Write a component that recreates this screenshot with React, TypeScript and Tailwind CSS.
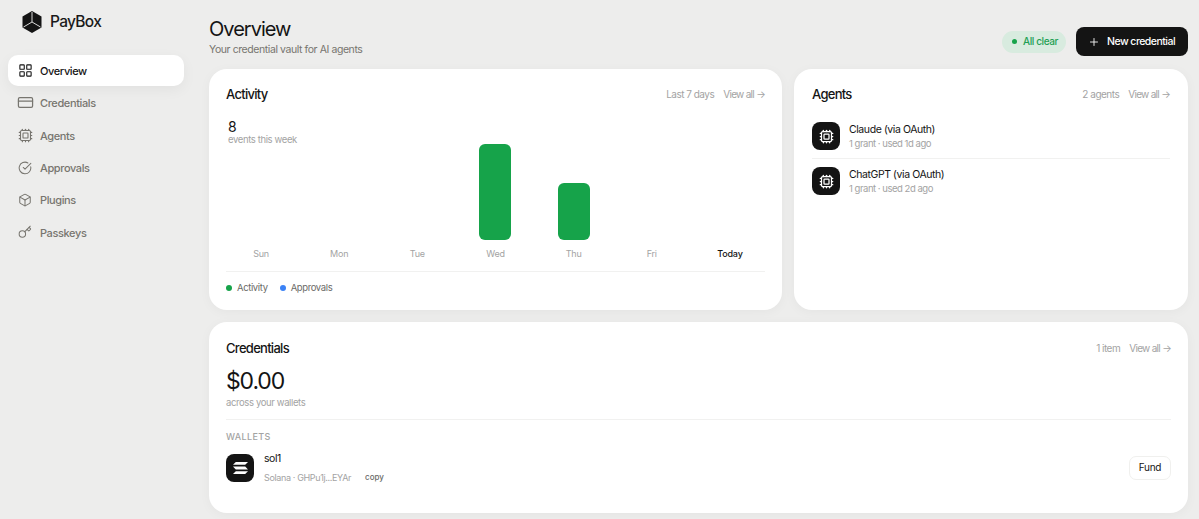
import React from 'react';
import { LayoutGrid, CreditCard, Cpu, CircleCheckBig, Box, Key, Plus } from 'lucide-react';

const navItems = [
  { label: 'Overview', icon: LayoutGrid, size: 15, active: true },
  { label: 'Credentials', icon: CreditCard, size: 17 },
  { label: 'Agents', icon: Cpu, size: 15 },
  { label: 'Approvals', icon: CircleCheckBig, size: 14 },
  { label: 'Plugins', icon: Box, size: 14 },
  { label: 'Passkeys', icon: Key, size: 14 },
];

const days = [
  { day: 'Sun', h: 0 },
  { day: 'Mon', h: 0 },
  { day: 'Tue', h: 0 },
  { day: 'Wed', h: 96 },
  { day: 'Thu', h: 57 },
  { day: 'Fri', h: 0 },
  { day: 'Today', h: 0 },
];

const agents = [
  { name: 'Claude (via OAuth)', sub: '1 grant · used 1d ago' },
  { name: 'ChatGPT (via OAuth)', sub: '1 grant · used 2d ago' },
];

const Logo = () => (
  <svg width="20" height="22" viewBox="0 0 20 22">
    <path d="M10 0 L19.5 5.5 L19.5 16.5 L10 22 L0.5 16.5 L0.5 5.5 Z" fill="#141414" />
    <path d="M10 1 V11 M10 11 L1.5 16 M10 11 L18.5 16" stroke="#ededec" strokeWidth="0.9" fill="none" />
  </svg>
);

const CardHead = ({ title, meta }: { title: string; meta: string }) => (
  <div className="flex items-center justify-between h-[20px]">
    <h2 className="pt-[2px] text-[13px] font-medium text-[#141414] tracking-[-0.055em]">{title}</h2>
    <div className="flex items-center gap-[9px] text-[10px] text-[#a3a3a3] tracking-[-0.05em]">
      <span>{meta}</span>
      <span className="tracking-[-0.07em]">View all →</span>
    </div>
  </div>
);

const App: React.FC = () => {
  return (
    <div
      className="flex w-[1199px] h-[519px] overflow-hidden bg-[#ededec]"
      style={{ fontFamily: 'Inter, "Liberation Sans", sans-serif' }}
    >
      {/* sidebar */}
      <aside className="w-[197px] shrink-0 pl-2 pr-[13px]">
        <div className="flex items-center gap-[8px] h-[55px] pl-[14px] pb-[11px]">
          <Logo />
          <span className="text-[15.5px] font-medium text-[#1a1a1a] tracking-[-0.045em]">PayBox</span>
        </div>
        <nav className="flex flex-col gap-[1.4px]">
          {navItems.map((item) => {
            const Icon = item.icon;
            return (
              <div
                key={item.label}
                className={
                  item.active
                    ? 'flex items-center h-[31px] pl-[10px] gap-[8px] rounded-[10px] bg-white text-[#141414] shadow-[0_4px_14px_rgba(0,0,0,0.05)]'
                    : 'flex items-center h-[31px] pl-[10px] gap-[8px] text-[#77756f]'
                }
              >
                <div className="flex items-center justify-center w-[14px] h-[14px]">
                  <Icon size={item.size} strokeWidth={1.75} className="shrink-0" />
                </div>
                <span className="pt-[1px] text-[11px] font-medium tracking-[-0.035em]">{item.label}</span>
              </div>
            );
          })}
        </nav>
      </aside>

      {/* main */}
      <main className="w-[979px] shrink-0 ml-[12px]">
        <header className="flex items-start justify-between h-[69px] pt-[16px]">
          <div>
            <h1 className="text-[20px] leading-[26px] font-normal text-[#141414] tracking-[-0.05em]">Overview</h1>
            <p className="text-[10.5px] leading-[16px] text-[#77756f] tracking-[-0.04em]">Your credential vault for AI agents</p>
          </div>
          <div className="flex items-center gap-[10px] mt-[11px]">
            <div className="flex items-center gap-[6px] h-[22px] pl-[10px] pr-[8px] rounded-full bg-[#d8ebdf] text-[#1fa055] text-[10px] font-medium tracking-[-0.04em]">
              <span className="w-[5px] h-[5px] rounded-full bg-[#16a34a]" />
              All clear
            </div>
            <button className="flex items-center gap-[7px] h-[29px] pl-[12px] pr-[13px] rounded-[8px] bg-[#141414] text-white text-[10.5px] font-medium tracking-[-0.05em]">
              <Plus size={12} strokeWidth={1.75} />
              New credential
            </button>
          </div>
        </header>

        <div className="grid grid-cols-[573px_394px] gap-[12px]">
          {/* activity */}
          <section className="h-[241px] rounded-[18px] bg-white px-[17px] pt-[15px] shadow-[0_2px_12px_rgba(0,0,0,0.04)]">
            <CardHead title="Activity" meta="Last 7 days" />
            <div className="relative mt-[14px] h-[142px] -mx-[4px]">
              <div className="absolute left-[6px] top-[2px]">
                <div className="text-[14px] leading-[14px] text-[#141414]">8</div>
                <div className="text-[9.5px] leading-[12px] text-[#a3a3a3] tracking-[-0.04em]">events this week</div>
              </div>
              <div className="grid grid-cols-7 h-full">
                {days.map((d) => (
                  <div key={d.day} className="flex flex-col items-center justify-end">
                    {d.h > 0 && (
                      <div className="w-[32px] rounded-[6px] bg-[#16a34a]" style={{ height: d.h }} />
                    )}
                    <span
                      className={
                        d.day === 'Today'
                          ? 'mt-[8px] text-[9px] leading-[12px] font-medium text-[#141414] tracking-[-0.02em]'
                          : 'mt-[8px] text-[9px] leading-[12px] text-[#a3a3a3] tracking-[-0.02em]'
                      }
                    >
                      {d.day}
                    </span>
                  </div>
                ))}
              </div>
            </div>
            <div className="mt-[11px] border-t border-[#f1f1f0] pt-[9px] flex items-center gap-[12px] text-[9.5px] text-[#6b6b68] tracking-[-0.04em]">
              <div className="flex items-center gap-[5px]">
                <span className="w-[6px] h-[6px] rounded-full bg-[#16a34a]" />
                Activity
              </div>
              <div className="flex items-center gap-[5px]">
                <span className="w-[6px] h-[6px] rounded-full bg-[#3b82f6]" />
                Approvals
              </div>
            </div>
          </section>

          {/* agents */}
          <section className="h-[241px] rounded-[18px] bg-white px-[18px] pt-[15px] shadow-[0_2px_12px_rgba(0,0,0,0.04)]">
            <CardHead title="Agents" meta="2 agents" />
            <div className="mt-[18px]">
              {agents.map((a, i) => (
                <div
                  key={a.name}
                  className={
                    i === 0
                      ? 'flex items-start gap-[9px] pb-[8px] border-b border-[#f1f1f0]'
                      : 'flex items-start gap-[9px] pt-[8px]'
                  }
                >
                  <div className="flex items-center justify-center w-[28px] h-[28px] rounded-[8px] bg-[#141414] text-white">
                    <Cpu size={15} strokeWidth={2} />
                  </div>
                  <div>
                    <div className="text-[10.5px] leading-[15px] text-[#141414] tracking-[-0.04em]">{a.name}</div>
                    <div className="text-[9.5px] leading-[13px] text-[#a3a3a3] tracking-[-0.05em]">{a.sub}</div>
                  </div>
                </div>
              ))}
            </div>
          </section>

          {/* credentials */}
          <section className="col-span-2 h-[191px] rounded-[18px] bg-white px-[17px] pt-[16px] shadow-[0_2px_12px_rgba(0,0,0,0.04)]">
            <CardHead title="Credentials" meta="1 item" />
            <div className="mt-[8px] text-[23px] leading-[30px] text-[#141414] tracking-[-0.05em]">$0.00</div>
            <div className="text-[9.5px] leading-[14px] text-[#a3a3a3] tracking-[-0.04em]">across your wallets</div>
            <div className="mt-[9px] border-t border-[#f1f1f0] pt-[11px]">
              <div className="text-[9px] leading-[12px] font-medium tracking-[0.04em] text-[#a3a3a3]">WALLETS</div>
              <div className="flex items-center justify-between mt-[8px]">
                <div className="flex items-center gap-[10px]">
                  <div className="flex items-center justify-center w-[28px] h-[28px] rounded-[8px] bg-[#141414]">
                    <svg width="15" height="12" viewBox="0 0 15 12" fill="#fff">
                      <path d="M2.8 0 H15 L12.2 2.8 H0 Z" />
                      <path d="M0 4.6 H12.2 L15 7.4 H2.8 Z" />
                      <path d="M2.8 9.2 H15 L12.2 12 H0 Z" />
                    </svg>
                  </div>
                  <div>
                    <div className="text-[10.5px] leading-[15px] text-[#141414] tracking-[-0.04em]">sol1</div>
                    <div className="flex items-center gap-[14px] mt-[5px] text-[9px] leading-[13px] text-[#a3a3a3] tracking-[-0.04em]">
                      <span>Solana · GHPu1j...EYAr</span>
                      <span className="text-[8px] font-medium text-[#6b6b68] tracking-normal">copy</span>
                    </div>
                  </div>
                </div>
                <button className="flex items-center justify-center w-[42px] h-[24px] rounded-[7px] border border-[#f0f0ee] bg-white text-[10px] text-[#141414] tracking-[-0.03em]">
                  Fund
                </button>
              </div>
            </div>
          </section>
        </div>
      </main>
    </div>
  );
};

export default App;
